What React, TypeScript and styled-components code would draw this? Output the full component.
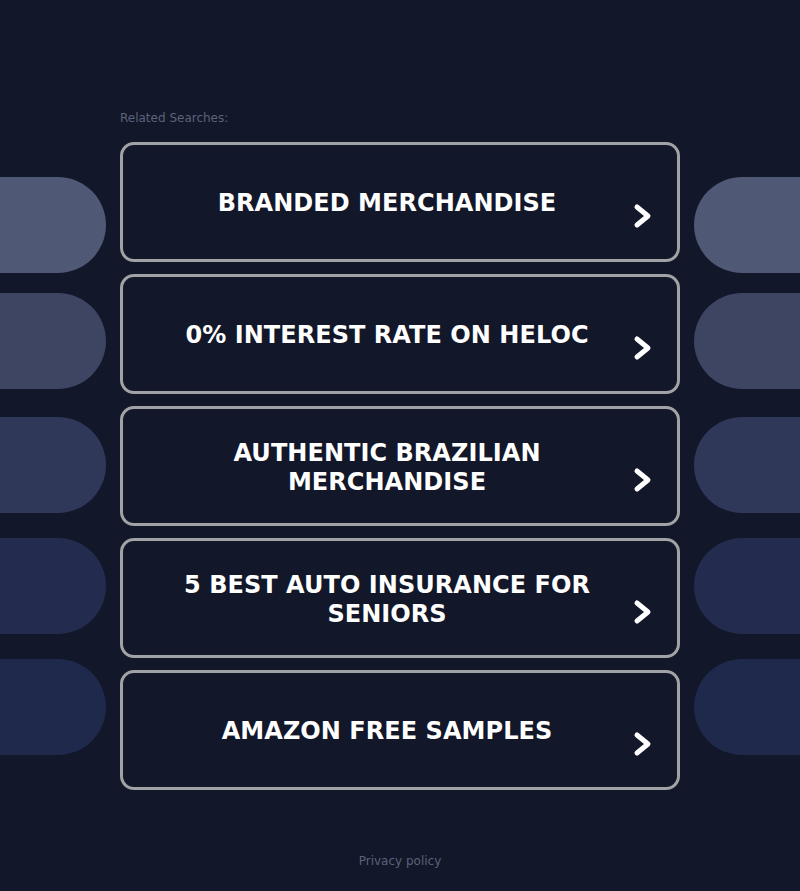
import React from "react";
import styled, { createGlobalStyle } from "styled-components";

const Global = createGlobalStyle`
  html, body { margin: 0; padding: 0; background: #121729; }
  body { font-family: "DejaVu Sans", Verdana, sans-serif; }
`;

const Page = styled.div`
  display: grid;
  grid-template-columns: 106px 560px 1fr;
  column-gap: 14px;
  min-height: 891px;
  background: #121729;
`;

const PillColumn = styled.div`
  display: flex;
  flex-direction: column;
  padding-top: 177px;
`;

const Pill = styled.div<{ $color: string; $side: "left" | "right"; $gap: number }>`
  height: 96px;
  margin-top: ${(p) => p.$gap}px;
  background: ${(p) => p.$color};
  border-radius: ${(p) => (p.$side === "left" ? "0 48px 48px 0" : "48px 0 0 48px")};
`;

const Main = styled.main`
  display: flex;
  flex-direction: column;
  padding-top: 111px;
`;

const Label = styled.div`
  font-size: 12px;
  line-height: 14px;
  color: #5b627a;
  margin-bottom: 17px;
`;

const List = styled.div`
  display: flex;
  flex-direction: column;
  gap: 12px;
`;

const Card = styled.a`
  position: relative;
  box-sizing: border-box;
  height: 120px;
  border: 3px solid #a1a2a6;
  border-radius: 14px;
  display: flex;
  align-items: center;
  justify-content: center;
  padding: 3px 50px 0 24px;
  text-decoration: none;
  color: #ffffff;
  cursor: pointer;
`;

const Title = styled.span`
  font-weight: bold;
  font-size: 24px;
  line-height: 29px;
  letter-spacing: 0.05px;
  text-align: center;
  text-transform: uppercase;
`;

const Arrow = styled.svg`
  position: absolute;
  right: 24px;
  top: 57px;
  width: 20px;
  height: 28px;
`;

const Footer = styled.footer`
  grid-column: 1 / -1;
  text-align: center;
  font-size: 12px;
  line-height: 14px;
  color: #5b627a;
  padding-top: 64px;
  padding-bottom: 23px;
`;

const items = [
  "Branded Merchandise",
  "0% Interest Rate on HELOC",
  "Authentic Brazilian Merchandise",
  "5 Best Auto Insurance for Seniors",
  "Amazon Free Samples",
];

const pills = [
  { color: "#4f5874", gap: 0 },
  { color: "#3d4563", gap: 20 },
  { color: "#2f3858", gap: 28 },
  { color: "#232c4e", gap: 25 },
  { color: "#1f294c", gap: 25 },
];

export default function App() {
  return (
    <>
      <Global />
      <Page>
        <PillColumn>
          {pills.map((p, i) => (
            <Pill key={i} $color={p.color} $side="left" $gap={p.gap} />
          ))}
        </PillColumn>
        <Main>
          <Label>Related Searches:</Label>
          <List>
            {items.map((t) => (
              <Card key={t}>
                <Title>{t}</Title>
                <Arrow viewBox="0 0 20 28">
                  <path
                    d="M4 5 L15 14 L4 23"
                    fill="none"
                    stroke="#ffffff"
                    strokeWidth="5"
                    strokeLinecap="round"
                    strokeLinejoin="round"
                  />
                </Arrow>
              </Card>
            ))}
          </List>
        </Main>
        <PillColumn>
          {pills.map((p, i) => (
            <Pill key={i} $color={p.color} $side="right" $gap={p.gap} />
          ))}
        </PillColumn>
        <Footer>Privacy policy</Footer>
      </Page>
    </>
  );
}
